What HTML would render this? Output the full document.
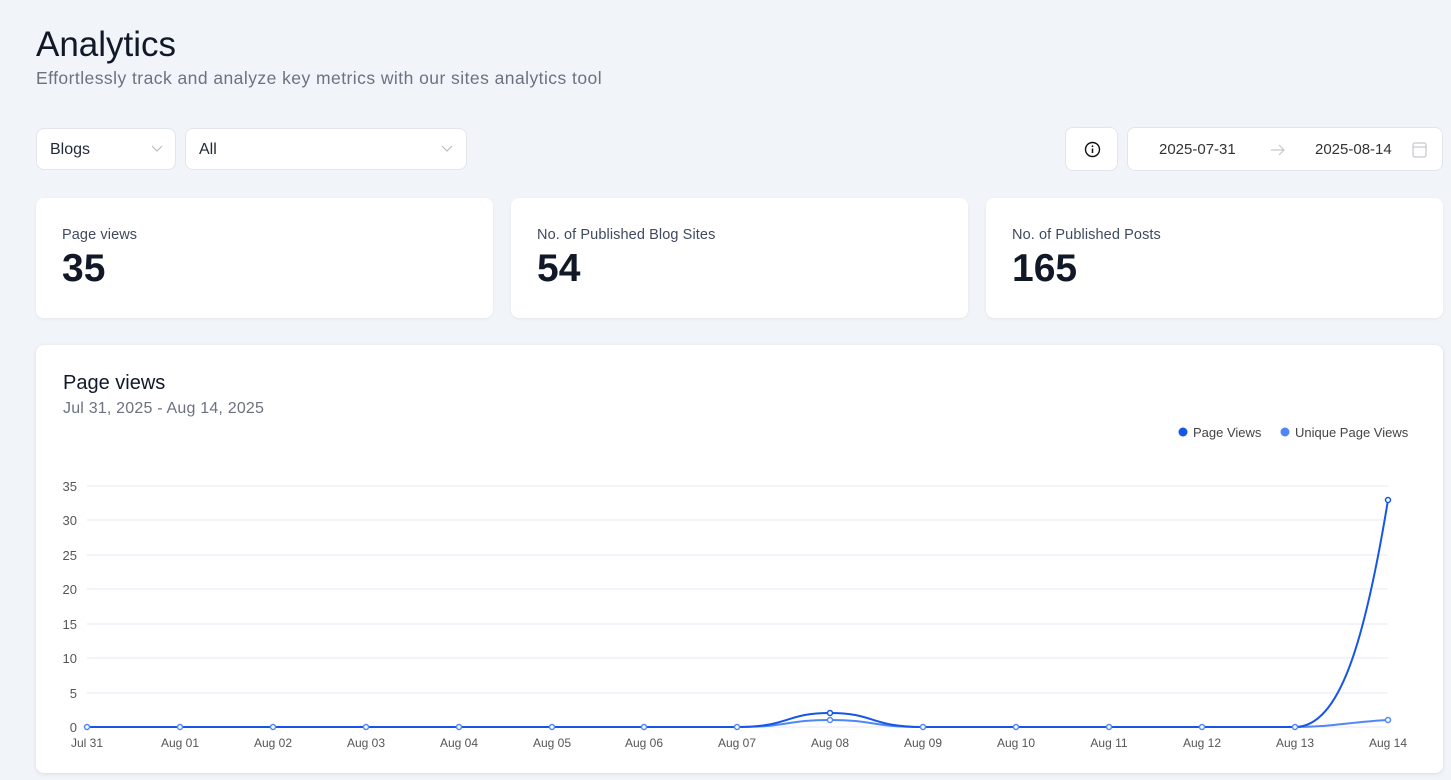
<!DOCTYPE html>
<html><head><meta charset="utf-8"><style>
*{box-sizing:border-box;margin:0;padding:0}
body{width:1451px;height:780px;overflow:hidden;background:#f1f5f9;font-family:"Liberation Sans",sans-serif;color:#111827;position:relative}
.abs{position:absolute}
.box{position:absolute;background:#fff;border:1px solid #e2e6ec;border-radius:8px}
.card{position:absolute;background:#fff;border-radius:8px;box-shadow:0 1px 3px rgba(0,0,0,.06)}
.lbl{position:absolute;left:26px;top:29px;font-size:14.5px;color:#3f4a5e;letter-spacing:0.1px}
.num{position:absolute;left:26px;top:49px;font-size:39px;font-weight:bold;color:#111827}
</style></head><body>
<div class="abs" style="left:36px;top:25px;font-size:35px;color:#111827">Analytics</div>
<div class="abs" style="left:36px;top:68px;font-size:17.5px;color:#6b7280;letter-spacing:0.45px">Effortlessly track and analyze key metrics with our sites analytics tool</div>

<div class="box" style="left:36px;top:128px;width:140px;height:42px"><span class="abs" style="left:13px;top:12px;font-size:16px;color:#1f2937">Blogs</span>
<svg class="abs" style="left:114px;top:16px" width="12" height="8"><path d="M1 1L6 6L11 1" fill="none" stroke="#b8bec8" stroke-width="1.2"/></svg></div>
<div class="box" style="left:185px;top:128px;width:282px;height:42px"><span class="abs" style="left:13px;top:12px;font-size:16px;color:#1f2937">All</span>
<svg class="abs" style="left:255px;top:16px" width="12" height="8"><path d="M1 1L6 6L11 1" fill="none" stroke="#b8bec8" stroke-width="1.2"/></svg></div>

<div class="box" style="left:1065px;top:127px;width:53px;height:44px">
<svg class="abs" style="left:18px;top:13px" width="17" height="17" viewBox="0 0 17 17"><circle cx="8.5" cy="8.5" r="7" fill="none" stroke="#111" stroke-width="1.4"/><path d="M8.5 7.5V12" stroke="#111" stroke-width="1.5"/><circle cx="8.5" cy="5.2" r=".9" fill="#111"/></svg></div>
<div class="box" style="left:1127px;top:127px;width:316px;height:44px">
<span class="abs" style="left:31px;top:13px;font-size:15px;color:#333">2025-07-31</span>
<svg class="abs" style="left:142px;top:15px" width="16" height="14"><path d="M1 7H14M9 2L14 7L9 12" fill="none" stroke="#c4c8ce" stroke-width="1.2"/></svg>
<span class="abs" style="left:187px;top:13px;font-size:15px;color:#333">2025-08-14</span>
<svg class="abs" style="left:284px;top:14px" width="15" height="16"><rect x="1" y="1" width="13" height="14" rx="2" fill="none" stroke="#c4c8ce" stroke-width="1.2"/><path d="M1 5H14" stroke="#c4c8ce" stroke-width="1.2"/></svg></div>

<div class="card" style="left:36px;top:198px;width:457px;height:120px"><div class="lbl">Page views</div><div class="num">35</div></div>
<div class="card" style="left:511px;top:198px;width:457px;height:120px"><div class="lbl">No. of Published Blog Sites</div><div class="num">54</div></div>
<div class="card" style="left:986px;top:198px;width:457px;height:120px"><div class="lbl">No. of Published Posts</div><div class="num">165</div></div>

<div class="card" style="left:36px;top:345px;width:1407px;height:428px;box-shadow:0 1px 4px rgba(0,0,0,.1)">
<div class="abs" style="left:27px;top:27px;font-size:20px;color:#111827">Page views</div>
<div class="abs" style="left:27px;top:55px;font-size:16px;color:#6b7280;letter-spacing:0.2px">Jul 31, 2025 - Aug 14, 2025</div>
</div>

<svg class="abs" style="left:0;top:0" width="1451" height="780" font-family="Liberation Sans, sans-serif" font-size="12" fill="#555">
<circle cx="1183" cy="432" r="4.5" fill="#1556e8"/><text x="1193" y="437" font-size="13" fill="#444">Page Views</text>
<circle cx="1285" cy="432" r="4.5" fill="#4f87f7"/><text x="1295" y="437" font-size="13" fill="#444">Unique Page Views</text>
<g stroke="#e6eaf4" stroke-width="1">
<path d="M87 486H1388M87 520H1388M87 555H1388M87 589H1388M87 624H1388M87 658H1388M87 693H1388M87 727H1388"/></g>
<g text-anchor="end" font-size="13">
<text x="77" y="491">35</text><text x="77" y="525">30</text><text x="77" y="560">25</text><text x="77" y="594">20</text><text x="77" y="629">15</text><text x="77" y="663">10</text><text x="77" y="698">5</text><text x="77" y="732">0</text></g>
<g text-anchor="middle" font-size="12">
<text x="87" y="747">Jul 31</text><text x="180" y="747">Aug 01</text><text x="273" y="747">Aug 02</text><text x="366" y="747">Aug 03</text><text x="459" y="747">Aug 04</text><text x="552" y="747">Aug 05</text><text x="644" y="747">Aug 06</text><text x="737" y="747">Aug 07</text><text x="830" y="747">Aug 08</text><text x="923" y="747">Aug 09</text><text x="1016" y="747">Aug 10</text><text x="1109" y="747">Aug 11</text><text x="1202" y="747">Aug 12</text><text x="1295" y="747">Aug 13</text><text x="1388" y="747">Aug 14</text></g>
<path d="M87 727H737C790 727 785 720 830 720C875 720 870 727 923 727H1295C1330 727 1350 722 1388 720" fill="none" stroke="#4f87f7" stroke-width="2"/>
<path d="M87 727H737C790 727 785 713 830 713C875 713 870 727 923 727H1295C1340 727 1365 640 1388 500" fill="none" stroke="#1556e8" stroke-width="2"/>
<g fill="#fff" stroke="#4f87f7" stroke-width="1.5">
<circle cx="87" cy="727" r="2.5"/><circle cx="180" cy="727" r="2.5"/><circle cx="273" cy="727" r="2.5"/><circle cx="366" cy="727" r="2.5"/><circle cx="459" cy="727" r="2.5"/><circle cx="552" cy="727" r="2.5"/><circle cx="644" cy="727" r="2.5"/><circle cx="737" cy="727" r="2.5"/><circle cx="830" cy="720" r="2.5"/><circle cx="923" cy="727" r="2.5"/><circle cx="1016" cy="727" r="2.5"/><circle cx="1109" cy="727" r="2.5"/><circle cx="1202" cy="727" r="2.5"/><circle cx="1295" cy="727" r="2.5"/><circle cx="1388" cy="720" r="2.5"/></g>
<g fill="#fff" stroke="#1556e8" stroke-width="1.5"><circle cx="830" cy="713" r="2.5"/><circle cx="1388" cy="500" r="2.5"/></g>
</svg>
</body></html>
